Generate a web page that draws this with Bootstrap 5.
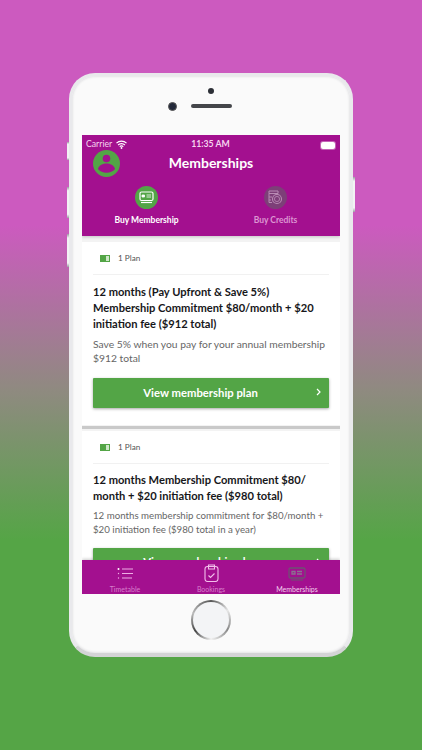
<!DOCTYPE html>
<html>

<head>
    <title>Memberships</title>
    <link href="https://cdn.jsdelivr.net/npm/bootstrap@5.3.0/dist/css/bootstrap.min.css" rel="stylesheet">
    <style>
        html, body {
            height: 750px;
            overflow: hidden;
        }

        body {
            background: linear-gradient(180deg, #cc5abf 0%, #cc5abf 30%, #8f8a80 52%, #55a546 72%, #55a546 100%);
            font-family: Lato, "Open Sans", sans-serif;
            padding-top: 73px;
        }

        .phone {
            position: relative;
            width: 284px;
            height: 584px;
            margin: 0 auto;
            background: #fafafa;
            border-radius: 26px;
            border: 3px solid #e9e9ec;
            border-bottom: 4px solid #d4d4d6;
            box-shadow: inset 0 0 3px #cfcfd2;
        }

        .side-btn {
            position: absolute;
            width: 2px;
            background: linear-gradient(180deg, #9d9da3 0, #f2f2f4 12%, #f2f2f4 88%, #9d9da3 100%);
        }

        .bezel-top {
            height: 59px;
            position: relative;
        }

        .front-dot {
            position: absolute;
            left: 136px;
            top: 12px;
            width: 6px;
            height: 6px;
            border-radius: 50%;
            background: #2c2f36;
        }

        .front-cam {
            position: absolute;
            left: 96px;
            top: 26px;
            width: 9px;
            height: 9px;
            border-radius: 50%;
            background: #23293a;
            border: 1px solid #555;
        }

        .front-speaker {
            position: absolute;
            left: 119px;
            top: 28px;
            width: 41px;
            height: 4px;
            border-radius: 2px;
            background: #44464a;
        }

        .screen {
            width: 258px;
            height: 459px;
            margin: 0 auto;
            background: #f3f3f3;
            overflow: hidden;
        }

        .app-head {
            height: 101px;
            background: #a3108f;
            color: #fff;
            flex-shrink: 0;
            box-shadow: 0 1px 3px rgba(0, 0, 0, .2);
        }

        .status-bar {
            height: 18px;
            padding: 3px 5px 0 4px;
            font-size: 8.7px;
            line-height: 12px;
            color: #f5d5ef;
        }

        .status-side {
            flex: 1 1 0;
        }

        .batt {
            width: 14px;
            height: 7px;
            background: #fff;
            border-radius: 2px;
            box-shadow: 0 0 0 1px rgba(255, 255, 255, .35);
        }

        .title-row {
            height: 27px;
            position: relative;
            margin-top: -3px;
        }

        .avatar {
            position: absolute;
            left: 11px;
            top: 0;
            width: 27px;
            height: 27px;
        }

        .app-title {
            font-size: 14px;
            font-weight: 700;
            line-height: 25px;
        }

        .head-tabs {
            margin-top: 9px;
        }

        .head-tab {
            width: 129px;
            font-size: 8.5px;
            font-weight: 700;
            line-height: 11px;
        }

        .head-tab svg {
            display: block;
            margin: 0 auto 6px;
        }

        .head-tab.off {
            color: #dc96d2;
        }

        .plans {
            flex: 1 1 auto;
            min-height: 0;
            overflow: hidden;
            padding-top: 6px;
        }

        .plan {
            background: #fff;
            padding: 0 11px;
            color: #17171a;
        }

        .plan-one {
            height: 183px;
        }

        .plan-sep {
            height: 3px;
            margin-top: 1px;
            margin-bottom: 2px;
            background: #c9c9c9;
        }

        .plan-count {
            height: 33px;
            border-bottom: 1px solid #f1f1f1;
            padding-left: 7px;
            font-size: 8.2px;
            color: #555;
        }

        .plan-name {
            font-size: 11.15px;
            font-weight: 700;
            line-height: 16.4px;
            margin: 7.5px 0 3.5px;
        }

        .plan-one .plan-name {
            margin: 8.5px 0 4.5px;
        }

        .plan-desc {
            font-size: 9.7px;
            line-height: 14px;
            color: #666;
            margin: 0;
            white-space: nowrap;
        }

        .plan-one .plan-desc {
            font-size: 10.3px;
        }

        .plan-btn {
            width: 100%;
            height: 30px;
            margin-top: 12px;
            padding: 0 21px 0 0;
            position: relative;
            border: 0;
            border-radius: 1px;
            background: #53a546;
            color: #fff;
            font-size: 11.3px;
            font-weight: 700;
            box-shadow: 0 1px 3px rgba(0, 0, 0, .35);
        }

        .plan-one .plan-btn {
            margin-top: 13px;
        }

        .plan-btn svg {
            position: absolute;
            right: 8px;
            top: 10px;
        }

        .tabbar {
            height: 34px;
            flex-shrink: 0;
            background: #a3108f;
            box-shadow: 0 -1px 3px rgba(0, 0, 0, .2);
        }

        .tabbar-item {
            width: 86px;
            font-size: 7px;
            line-height: 8px;
            color: #d77fcb;
            padding-top: 4px;
        }

        .tabbar-item svg {
            display: block;
            margin: 0 auto 3px;
        }

        .tabbar-item.on {
            color: #f3d3ee;
        }

        .home-btn {
            width: 40px;
            height: 40px;
            margin: 6px auto 0;
            border-radius: 50%;
            background: conic-gradient(#555, #e6e6e6 60deg, #888 120deg, #f2f2f2 180deg, #444 235deg, #bbb 290deg, #555);
            padding: 2px;
        }

        .home-btn div {
            width: 100%;
            height: 100%;
            border-radius: 50%;
            background: #f3f4f6;
        }
    </style>
</head>

<body>
    <div class="phone">
        <div class="side-btn" style="left:-5px;top:66px;height:18px"></div>
        <div class="side-btn" style="left:-5px;top:111px;height:31px"></div>
        <div class="side-btn" style="left:-5px;top:158px;height:33px"></div>
        <div class="side-btn" style="right:-5px;top:101px;height:35px"></div>

        <div class="bezel-top">
            <div class="front-dot"></div>
            <div class="front-cam"></div>
            <div class="front-speaker"></div>
        </div>

        <div class="screen d-flex flex-column">
            <div class="app-head">
                <div class="status-bar d-flex align-items-start">
                    <span class="status-side d-flex align-items-center gap-1">Carrier
                        <svg width="11" height="9" viewBox="0 0 11 9">
                            <path d="M0.500 3.200a7 7 0 0 1 10 0M2.100 5a4.800 4.800 0 0 1 6.800 0M3.700 6.700a2.500 2.500 0 0 1 3.600 0" fill="none" stroke="#fff" stroke-width="1.200"/>
                            <circle cx="5.500" cy="8" r=".9" fill="#fff"/>
                        </svg>
                    </span>
                    <span class="fw-bold">11:35 AM</span>
                    <span class="status-side d-flex justify-content-end"><span class="batt mt-1"></span></span>
                </div>
                <div class="title-row text-center">
                    <svg class="avatar" viewBox="0 0 27 27">
                        <circle cx="13.500" cy="13.500" r="13.500" fill="#53a546"/>
                        <circle cx="13.500" cy="8.500" r="3.800" fill="#a3108f"/>
                        <path d="M5 19c1-4 5-5.500 8.500-5.500S21 15 22 19c-2 2.500-5 3.800-8.500 3.800S7 21.500 5 19z" fill="#a3108f"/>
                    </svg>
                    <div class="app-title">Memberships</div>
                </div>
                <div class="head-tabs d-flex text-center">
                    <div class="head-tab">
                        <svg width="23" height="23" viewBox="0 0 23 23">
                            <circle cx="11.500" cy="11.500" r="11.500" fill="#53a546"/>
                            <rect x="5" y="6" width="13" height="8.500" rx="1.500" fill="none" stroke="#fff" stroke-width="1.200"/>
                            <path d="M7 9h2.500v2H7zM11.500 9h4.500M11.500 11h4.500" fill="#fff" stroke="#fff" stroke-width=".8"/>
                            <path d="M6 16.500h11" stroke="#fff" stroke-width="1.200"/>
                        </svg>
                        Buy Membership
                    </div>
                    <div class="head-tab off">
                        <svg width="23" height="23" viewBox="0 0 23 23">
                            <circle cx="11.500" cy="11.500" r="11.500" fill="#7d3f78"/>
                            <path d="M5 5h9v2.500H5zM5 7.500V11h3M5 11v3h2M5 14v2.500h3" fill="none" stroke="#b98bb4" stroke-width="1"/>
                            <circle cx="13" cy="13" r="4.500" fill="#7d3f78" stroke="#b98bb4" stroke-width="1.100"/>
                            <circle cx="13" cy="13" r="2.600" fill="none" stroke="#b98bb4" stroke-width=".8"/>
                        </svg>
                        Buy Credits
                    </div>
                </div>
            </div>

            <div class="plans">
                <div class="plan plan-one">
                    <div class="plan-count d-flex align-items-center gap-2">
                        <svg width="10" height="7" viewBox="0 0 10 7">
                            <rect width="10" height="7" fill="#53a546"/>
                            <rect x="6" y="1" width="3" height="5" fill="#cfe8ca"/>
                        </svg>
                        1 Plan
                    </div>
                    <div class="plan-name">12 months (Pay Upfront &amp; Save 5%) Membership Commitment $80/month + $20 initiation fee ($912 total)</div>
                    <p class="plan-desc">Save 5% when you pay for your annual membership<br>$912 total</p>
                    <button class="plan-btn" type="button">View membership plan
                        <svg width="5" height="8" viewBox="0 0 5 8"><path d="M1 1l3 3-3 3" fill="none" stroke="#fff" stroke-width="1.200"/></svg>
                    </button>
                </div>
                <div class="plan-sep"></div>
                <div class="plan">
                    <div class="plan-count d-flex align-items-center gap-2">
                        <svg width="10" height="7" viewBox="0 0 10 7">
                            <rect width="10" height="7" fill="#53a546"/>
                            <rect x="6" y="1" width="3" height="5" fill="#cfe8ca"/>
                        </svg>
                        1 Plan
                    </div>
                    <div class="plan-name">12 months Membership Commitment $80/ month + $20 initiation fee ($980 total)</div>
                    <p class="plan-desc">12 months membership commitment for $80/month +<br>$20 initiation fee ($980 total in a year)</p>
                    <button class="plan-btn" type="button">View membership plan
                        <svg width="5" height="8" viewBox="0 0 5 8"><path d="M1 1l3 3-3 3" fill="none" stroke="#fff" stroke-width="1.200"/></svg>
                    </button>
                </div>
            </div>

            <div class="tabbar d-flex text-center">
                <div class="tabbar-item">
                    <svg width="17" height="18" viewBox="0 0 17 18" fill="none" stroke="#eeaee5" stroke-width="1.100">
                        <path d="M5 5h11M5 9.500h11M5 14h10"/>
                        <circle cx="1.500" cy="5" r="1" fill="#fff" stroke="none"/>
                        <circle cx="1.500" cy="9.500" r=".7" fill="#eeaee5" stroke="none"/>
                        <circle cx="1.500" cy="14" r=".7" fill="#eeaee5" stroke="none"/>
                    </svg>
                    Timetable
                </div>
                <div class="tabbar-item">
                    <svg width="15" height="18" viewBox="0 0 15 18" fill="none" stroke="#f2bfeb" stroke-width="1.100">
                        <rect x="1" y="2.500" width="13" height="15" rx="2.500"/>
                        <path d="M4.500 5V1h6v4zM4.500 11.500l2 2 4-4"/>
                    </svg>
                    Bookings
                </div>
                <div class="tabbar-item on">
                    <svg width="18" height="18" viewBox="0 0 18 18" fill="none" stroke="#6f5273" stroke-width="1.300">
                        <rect x="1" y="4" width="16" height="10" rx="1.500"/>
                        <path d="M3 16h12" stroke-width="1"/>
                        <path d="M4 7.500h3V10H4zM9 7.500h5M9 10h5" stroke="#8a7390"/>
                    </svg>
                    Memberships
                </div>
            </div>
        </div>

        <div class="home-btn"><div></div></div>
    </div>

    <script src="https://cdn.jsdelivr.net/npm/bootstrap@5.3.0/dist/js/bootstrap.bundle.min.js"></script>
</body>

</html>
